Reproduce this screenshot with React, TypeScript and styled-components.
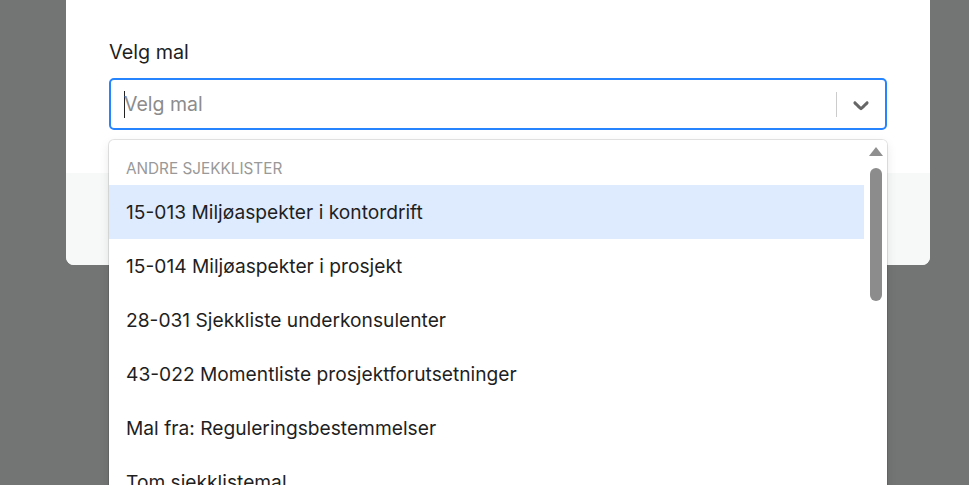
import styled, { createGlobalStyle } from "styled-components";

const GlobalStyle = createGlobalStyle`
    html, body {
        margin: 0;
        padding: 0;
        height: 100%;
        overflow: hidden;
        background: #737574;
        font-family: "Inter", "Noto Sans", sans-serif;
    }
`

const options = [
    "15-013 Miljøaspekter i kontordrift",
    "15-014 Miljøaspekter i prosjekt",
    "28-031 Sjekkliste underkonsulenter",
    "43-022 Momentliste prosjektforutsetninger",
    "Mal fra: Reguleringsbestemmelser",
    "Tom sjekklistemal",
]

const ChevronIcon = () => (
    <svg width="26" height="26" viewBox="0 0 20 20" fill="currentColor" aria-hidden="true">
        <path d="M4.516 7.548c0.436-0.446 1.043-0.481 1.576 0l3.908 3.747 3.908-3.747c0.533-0.481 1.141-0.446 1.574 0 0.436 0.445 0.408 1.197 0 1.615-0.406 0.418-4.695 4.502-4.695 4.502-0.217 0.223-0.502 0.335-0.787 0.335s-0.57-0.112-0.789-0.335c0 0-4.287-4.084-4.695-4.502s-0.436-1.17 0-1.615z" />
    </svg>
)

export default function App() {
    return (
        <>
            <GlobalStyle />
            <Page>
                <Modal>
                    <Body>
                        <Label>Velg mal</Label>
                        <SelectWrap>
                            <Control>
                                <ValueArea>
                                    <Caret />
                                    <Placeholder>Velg mal</Placeholder>
                                </ValueArea>
                                <Separator />
                                <Indicator>
                                    <ChevronIcon />
                                </Indicator>
                            </Control>
                            <Menu>
                                <MenuList>
                                    <GroupHeading>Andre sjekklister</GroupHeading>
                                    {options.map((o, i) => (
                                        <Option key={o} $focused={i === 0}>{o}</Option>
                                    ))}
                                </MenuList>
                                <Rail>
                                    <ArrowUp />
                                    <Thumb />
                                </Rail>
                            </Menu>
                        </SelectWrap>
                    </Body>
                    <Footer />
                </Modal>
            </Page>
        </>
    )
}

const Page = styled.div`
    display: flex;
    justify-content: center;
    padding-left: 27px;
    width: 969px;
    box-sizing: border-box;
`

const Modal = styled.div`
    width: 864px;
    margin-top: -12px;
    background: #ffffff;
    border-radius: 8px;
    display: flex;
    flex-direction: column;
`

const Body = styled.div`
    padding: 52px 43px 43px 43px;
    border-radius: 8px 8px 0 0;
`

const Label = styled.div`
    font-size: 19.8px;
    line-height: 25px;
    color: #1f1f1f;
    margin-bottom: 13px;
`

const SelectWrap = styled.div`
    position: relative;
`

const Control = styled.div`
    height: 52px;
    box-sizing: border-box;
    border: 2px solid #2684ff;
    border-radius: 5px;
    display: flex;
    align-items: center;
    background: #fff;
`

const ValueArea = styled.div`
    flex: 1;
    display: flex;
    align-items: center;
    padding-left: 13px;
`

const Caret = styled.span`
    width: 1px;
    height: 27px;
    background: #222;
`

const Placeholder = styled.span`
    font-size: 19.5px;
    color: #8c8c8c;
    margin-left: -1px;
`

const Separator = styled.span`
    width: 1px;
    height: 25px;
    background: #cccccc;
`

const Indicator = styled.div`
    width: 48px;
    display: flex;
    justify-content: center;
    align-items: center;
    color: #666666;
    padding-top: 1px;
`

const Menu = styled.div`
    position: absolute;
    top: 62px;
    left: 0;
    right: 0;
    height: 380px;
    background: #fff;
    border-radius: 5px;
    box-shadow: 0 0 0 1px rgba(0, 0, 0, 0.1), 0 4px 11px rgba(0, 0, 0, 0.1);
    display: flex;
    overflow: hidden;
`

const MenuList = styled.div`
    flex: 1;
    padding-top: 4px;
`

const GroupHeading = styled.div`
    font-size: 15.3px;
    text-transform: uppercase;
    color: #999999;
    padding: 15px 17px 6px;
    line-height: 20px;
`

const Option = styled.div<{ $focused?: boolean }>`
    height: 54px;
    display: flex;
    align-items: center;
    padding: 0 17px;
    font-size: 19.2px;
    color: #1f1f1f;
    background: ${(p) => (p.$focused ? "#deebff" : "transparent")};
`

const Rail = styled.div`
    width: 23px;
    display: flex;
    flex-direction: column;
    align-items: center;
    padding-top: 7px;
    background: #ffffff;
`

const ArrowUp = styled.span`
    width: 0;
    height: 0;
    border-left: 7px solid transparent;
    border-right: 7px solid transparent;
    border-bottom: 9px solid #8f8f8f;
    margin-left: 1px;
`

const Thumb = styled.span`
    width: 12px;
    height: 133px;
    margin-top: 12px;
    margin-left: 1px;
    border-radius: 6px;
    background: #8c8c8c;
`

const Footer = styled.div`
    height: 92px;
    background: #f7f8f8;
    border-radius: 0 0 8px 8px;
`
